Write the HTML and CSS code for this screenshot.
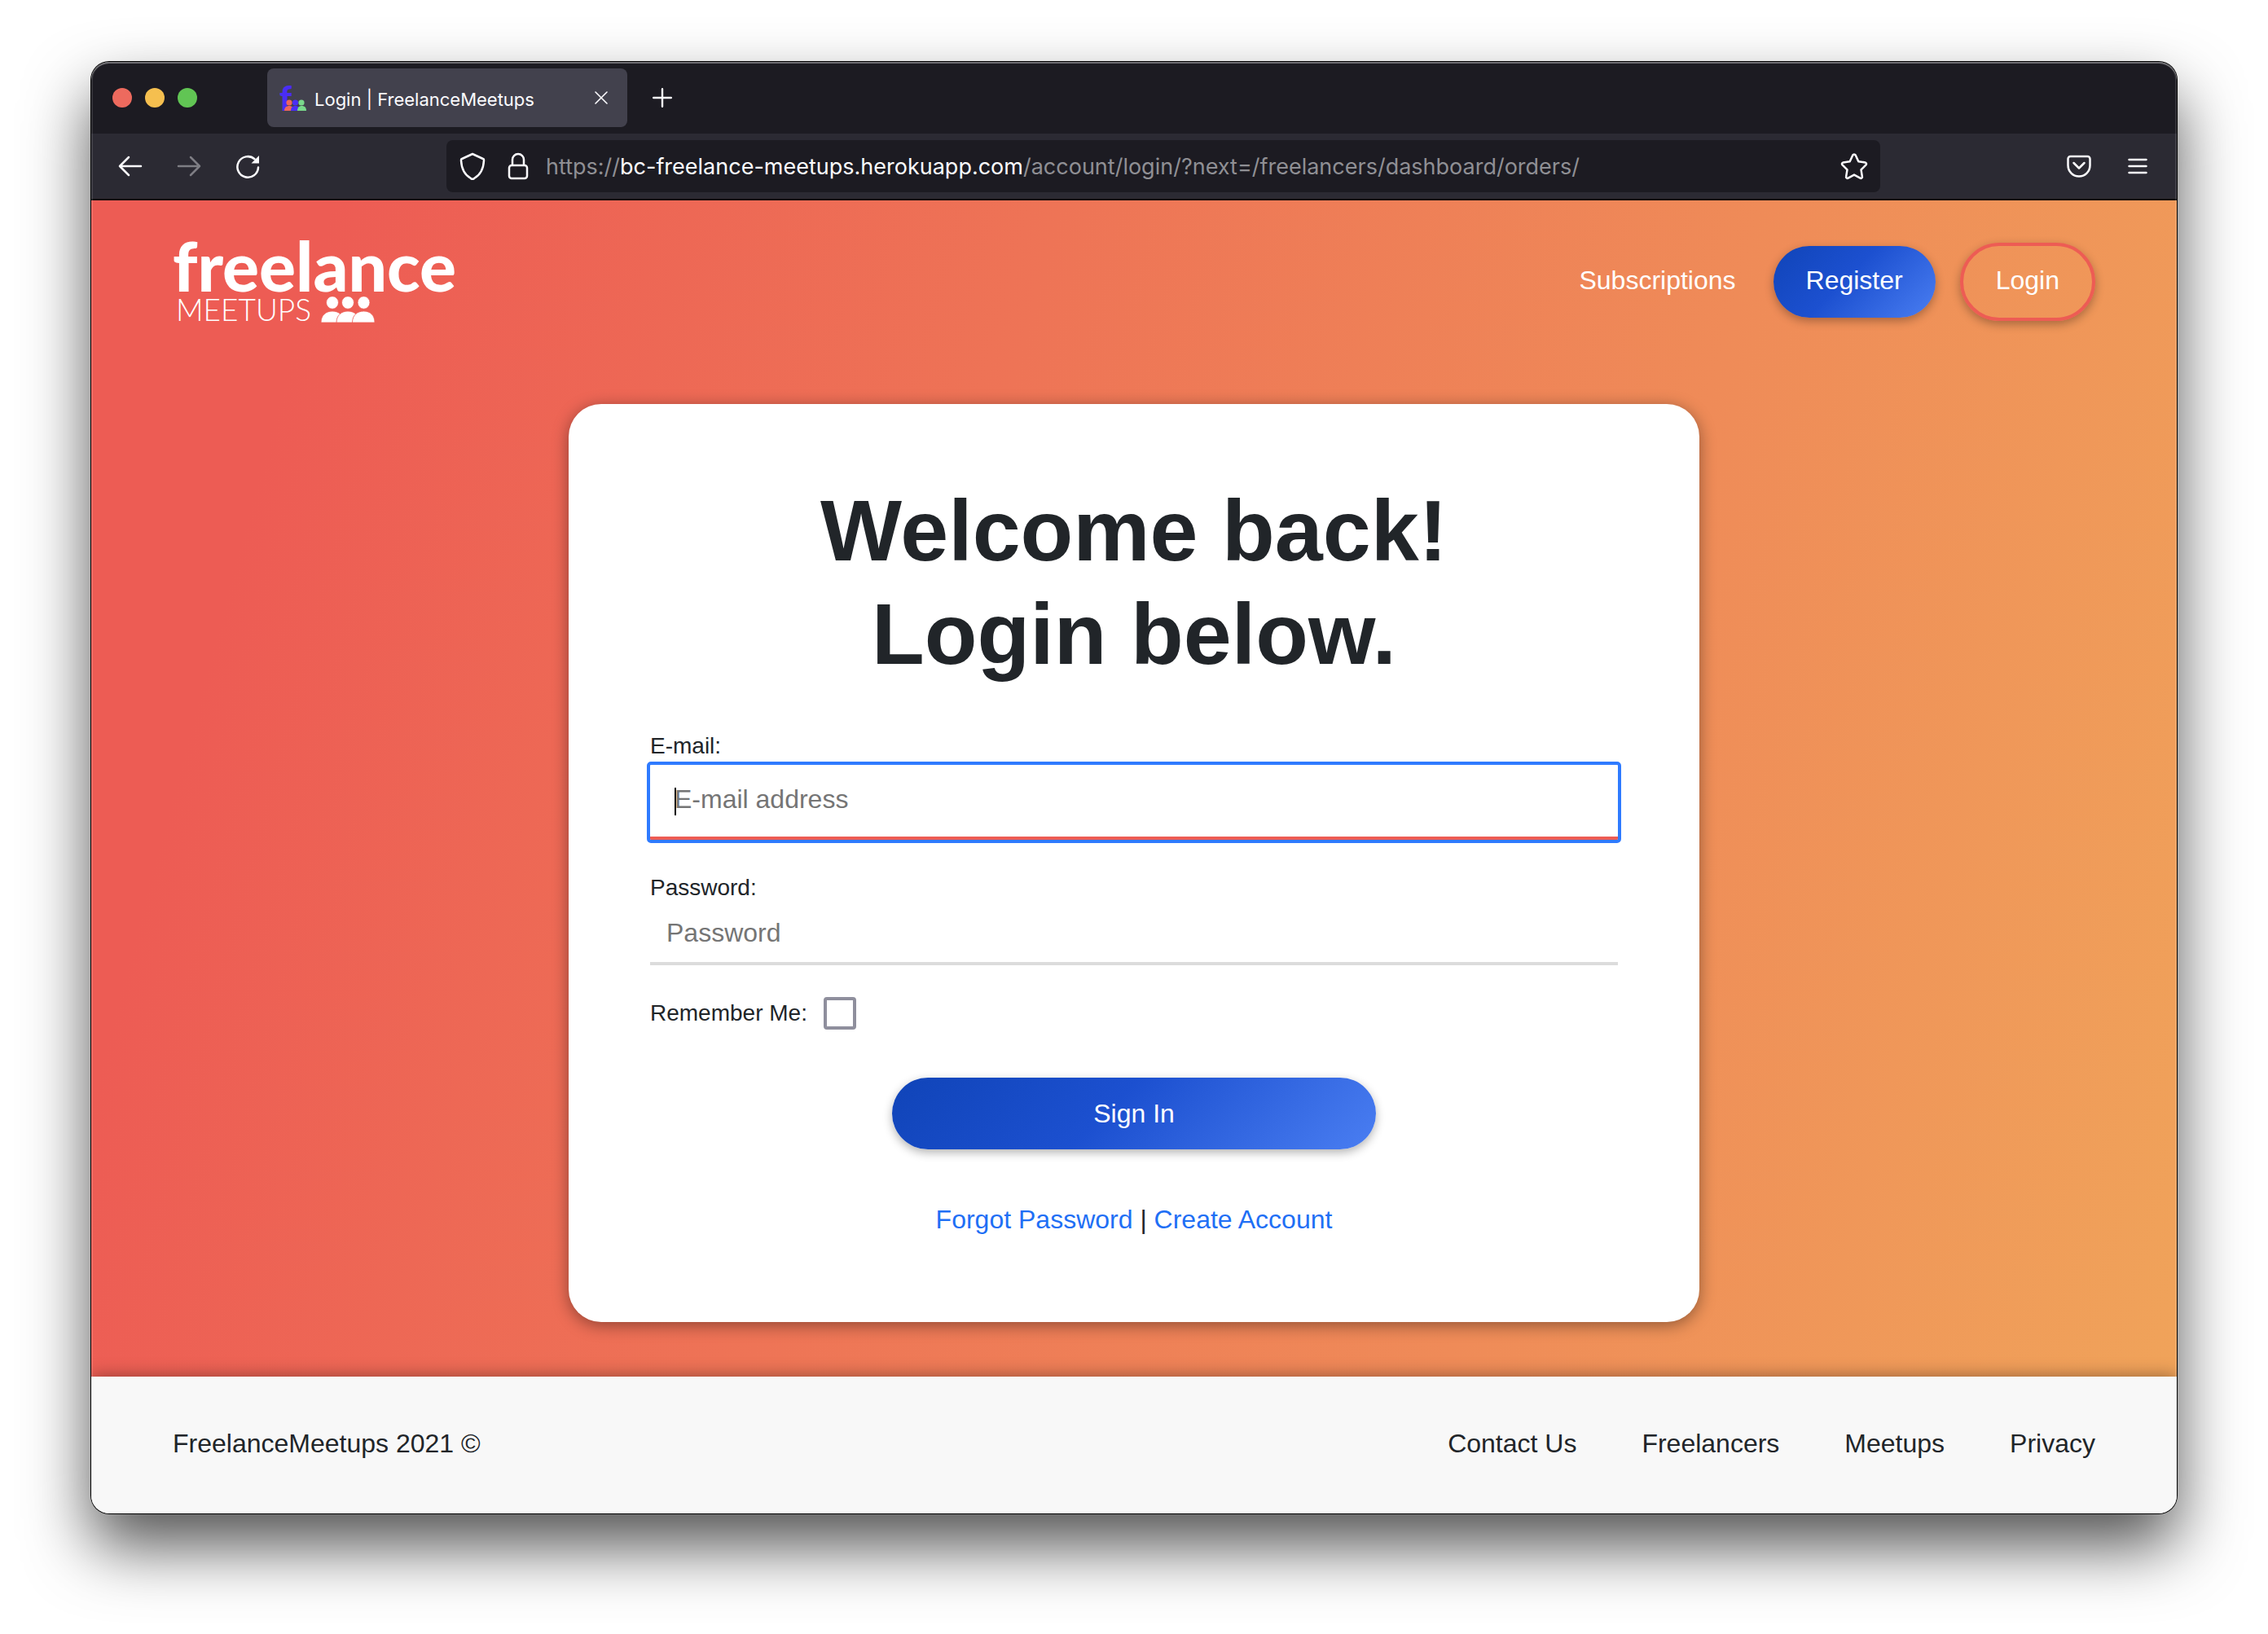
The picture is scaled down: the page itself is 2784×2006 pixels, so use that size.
FILE: index.html
```html
<!DOCTYPE html>
<html lang="en">
<head>
<meta charset="utf-8">
<title>Login | FreelanceMeetups</title>
<link rel="stylesheet" href="styles.css">
</head>
<body>
<div class="window">
  <div class="tabstrip">
    <div class="lights">
      <span class="light light-close"></span>
      <span class="light light-min"></span>
      <span class="light light-max"></span>
    </div>
    <div class="tab">
      <svg class="favicon" viewBox="0 0 32 32" aria-hidden="true">
        <text class="favicon-letter" x="-1" y="32">f</text>
        <g fill="#ee655c"><circle cx="11" cy="22" r="3.6"/><path d="M5 32c0-4 2.500-6 6-6s6 2 6 6z"/></g>
        <g fill="#4a2df5"><circle cx="18.500" cy="22" r="3.600"/><path d="M13 32c0-4 2-6 5.500-6s5.500 2 5.500 6z"/></g>
        <g fill="#79d98b"><circle cx="26" cy="22" r="3.600"/><path d="M21 32c0-4 2-6 5.500-6s5.500 2 5.500 6z"/></g>
      </svg>
      <span class="tab-title">Login | FreelanceMeetups</span>
      <button class="icon-button" type="button" aria-label="Close tab">
        <svg width="16" height="16" viewBox="0 0 16 16" fill="none" stroke="#fbfbfe" stroke-width="1.600" stroke-linecap="round"><path d="M1 1l14 14M15 1L1 15"/></svg>
      </button>
    </div>
    <button class="icon-button" type="button" aria-label="New tab">
      <svg width="24" height="24" viewBox="0 0 24 24" fill="none" stroke="#fbfbfe" stroke-width="2.400" stroke-linecap="round"><path d="M12 1.200v21.600M1.200 12h21.600"/></svg>
    </button>
  </div>

  <div class="toolbar">
    <div class="history">
      <button class="icon-button" type="button" aria-label="Back">
        <svg width="32" height="32" viewBox="0 0 32 32" fill="none" stroke="#fbfbfe" stroke-width="2.500" stroke-linecap="round" stroke-linejoin="round"><path d="M29 16H3M14 5L3 16l11 11"/></svg>
      </button>
      <button class="icon-button is-dim" type="button" aria-label="Forward">
        <svg width="32" height="32" viewBox="0 0 32 32" fill="none" stroke="#fbfbfe" stroke-width="2.500" stroke-linecap="round" stroke-linejoin="round"><path d="M3 16h26M18 5l11 11-11 11"/></svg>
      </button>
      <button class="icon-button" type="button" aria-label="Reload">
        <svg width="32" height="32" viewBox="0 0 32 32" fill="none" stroke="#fbfbfe" stroke-width="2.500" stroke-linecap="round"><path d="M29 17.500A12.800 12.800 0 1 1 24.500 7.200"/><path d="M30 3v9.500h-9.500z" fill="#fbfbfe" stroke="none"/></svg>
      </button>
    </div>
    <div class="urlbar">
      <svg width="44" height="34" viewBox="-6 0 44 34" fill="none" stroke="#fbfbfe" stroke-width="2.500" stroke-linejoin="round"><path d="M16 2L29 8c1 0 1 1 1 2-.5 10-4 17.500-12 22a3 3 0 0 1-4 0C6 27.500 2.500 20 2 10c0-1 0-2 1-2z"/></svg>
      <svg width="28" height="34" viewBox="0 0 28 34" fill="none" stroke="#fbfbfe" stroke-width="2.500"><path d="M7 16V9a7 7 0 0 1 14 0v7"/><rect x="3" y="16" width="22" height="16" rx="3"/></svg>
      <span class="url">https://<span class="url-host">bc-freelance-meetups.herokuapp.com</span>/account/login/?next=/freelancers/dashboard/orders/</span>
      <button class="icon-button" type="button" aria-label="Bookmark this page">
        <svg width="34" height="34" viewBox="0 0 34 34" fill="none" stroke="#fbfbfe" stroke-width="2.500" stroke-linejoin="round"><path d="M15.300 3.500a2 2 0 0 1 3.400 0l3.600 7.700 8.200 1.200a1.800 1.800 0 0 1 1 3l-6 6 1.400 8.500a1.700 1.700 0 0 1-2.500 1.800L17 27.600l-7.400 4.100a1.700 1.700 0 0 1-2.500-1.800l1.400-8.500-6-6a1.800 1.800 0 0 1 1-3l8.200-1.200z"/></svg>
      </button>
    </div>
    <div class="tools">
      <button class="icon-button" type="button" aria-label="Save to Pocket">
        <svg width="30" height="28" viewBox="0 0 30 28" fill="none" stroke="#fbfbfe" stroke-width="2.500" stroke-linecap="round" stroke-linejoin="round"><path d="M4.500 2h21a3 3 0 0 1 3 3v8a13.500 13.500 0 0 1-27 0V5a3 3 0 0 1 3-3z"/><path d="M8.500 10l6.500 6.500 6.500-6.500"/></svg>
      </button>
      <button class="icon-button" type="button" aria-label="Open application menu">
        <svg width="24" height="22" viewBox="0 0 24 22" stroke="#fbfbfe" stroke-width="2.500" stroke-linecap="round"><path d="M1.500 3h21M1.500 11h21M1.500 19h21"/></svg>
      </button>
    </div>
  </div>

  <main class="page">
    <header class="site-header">
      <a class="logo" href="#" aria-label="Freelance Meetups">
        <span class="logo-name">freelance</span>
        <span class="logo-sub">
          <span>MEETUPS</span>
          <svg width="66" height="32" viewBox="0 0 66 32" fill="#fff" stroke="#ed5c54" stroke-width="0.800" aria-hidden="true">
            <ellipse cx="14" cy="7.500" rx="7.500" ry="7.800"/><ellipse cx="33" cy="7.500" rx="7.500" ry="7.800"/><ellipse cx="52.500" cy="7.500" rx="7.500" ry="7.800"/>
            <path d="M0 32c0-9 6-14 14-14s14 5 14 14z"/><path d="M19 32c0-9 6-14 14-14s14 5 14 14z"/><path d="M38.500 32c0-9 6-14 14-14s13.500 5 13.500 14z"/>
          </svg>
        </span>
      </a>
      <nav class="site-nav">
        <a class="nav-link" href="#">Subscriptions</a>
        <a class="btn btn-primary" href="#">Register</a>
        <a class="btn btn-outline" href="#">Login</a>
      </nav>
    </header>

    <section class="card">
      <h1 class="card-title">Welcome back!<br>Login below.</h1>
      <form class="login-form">
        <div class="field">
          <label for="email">E-mail:</label>
          <div class="control is-focused">
            <input class="input" id="email" type="email" placeholder="E-mail address">
          </div>
        </div>
        <div class="field">
          <label for="password">Password:</label>
          <div class="control">
            <input class="input" id="password" type="password" placeholder="Password">
          </div>
        </div>
        <div class="remember">
          <label for="remember">Remember Me:</label>
          <input class="checkbox" id="remember" type="checkbox">
        </div>
        <button class="btn btn-primary btn-submit" type="submit">Sign In</button>
      </form>
      <p class="card-links"><a href="#">Forgot Password</a> | <a href="#">Create Account</a></p>
    </section>
  </main>

  <footer class="site-footer">
    <span>FreelanceMeetups 2021 ©</span>
    <nav class="footer-nav">
      <a href="#">Contact Us</a>
      <a href="#">Freelancers</a>
      <a href="#">Meetups</a>
      <a href="#">Privacy</a>
    </nav>
  </footer>
</div>
</body>
</html>
```
FILE: styles.css
```css
*,
*::before,
*::after {
  box-sizing: border-box;
}

body {
  margin: 0;
  padding: 76px 112px 148px;
  background: #fff;
  color: #212529;
  font-family: "Liberation Sans", Arial, sans-serif;
  font-size: 32px;
  line-height: 48px;
}

a {
  color: inherit;
  text-decoration: none;
}

svg {
  display: block;
  flex: none;
}

/* Browser window */
.window {
  position: relative;
  display: flex;
  flex-direction: column;
  min-height: calc(100vh - 224px);
  border-radius: 22px;
  overflow: hidden;
  box-shadow: 0 0 0 1px #000, 0 40px 80px rgba(0, 0, 0, 0.68);
}

.window::after {
  content: "";
  position: absolute;
  inset: 0;
  border-radius: inherit;
  box-shadow: inset 0 2px 0 rgba(255, 255, 255, 0.3), inset 0 0 0 2px rgba(255, 255, 255, 0.1);
  pointer-events: none;
}

.icon-button {
  display: flex;
  padding: 0;
  border: 0;
  background: none;
}

.is-dim {
  opacity: 0.4;
}

.tabstrip {
  display: flex;
  align-items: center;
  height: 88px;
  padding: 0 26px;
  background: #1c1b22;
  font-family: Inter, sans-serif;
}

.lights {
  display: flex;
  gap: 16px;
  margin-right: 86px;
}

.light {
  width: 24px;
  height: 24px;
  border-radius: 50%;
}

.light-close { background: #ed6a5e; }
.light-min { background: #f5bf4f; }
.light-max { background: #61c554; }

.tab {
  display: flex;
  align-items: center;
  width: 442px;
  height: 72px;
  margin-right: 31px;
  padding: 0 24px 0 16px;
  border-radius: 8px;
  background: #42414d;
  color: #fbfbfe;
  font-size: 22px;
}

.favicon {
  width: 32px;
  height: 32px;
  margin-right: 10px;
  overflow: visible;
}

.favicon-letter {
  fill: #4a2df5;
  font: 900 42px Lato, sans-serif;
}

.tab-title {
  flex: 1;
  padding-top: 4px;
  white-space: nowrap;
}

.toolbar {
  display: flex;
  align-items: center;
  height: 82px;
  padding: 0 36px 0 32px;
  border-bottom: 2px solid #0c0c0d;
  background: #2b2a33;
}

.history {
  display: flex;
  gap: 40px;
  margin-right: 228px;
}

.urlbar {
  display: flex;
  flex: 1;
  align-items: center;
  gap: 20px;
  height: 64px;
  padding: 0 15px 0 10px;
  border-radius: 8px;
  background: #1c1b22;
}

.url {
  flex: 1;
  padding-top: 2px;
  color: #8f8f94;
  font-family: Inter, sans-serif;
  font-size: 27px;
  white-space: nowrap;
}

.url-host {
  color: #fbfbfe;
}

.tools {
  display: flex;
  align-items: center;
  gap: 45px;
  margin-left: 229px;
}

/* Page */
.page {
  flex: 1;
  padding: 52px 100px 67px;
  background: linear-gradient(105deg, #ed5c54 10%, #f0a35a);
}

.site-header {
  display: flex;
  align-items: center;
  justify-content: space-between;
  height: 96px;
  color: #fff;
}

.logo {
  display: flex;
  flex-direction: column;
  gap: 4px;
  font-family: Lato, sans-serif;
}

.logo-name {
  font-size: 84px;
  font-weight: 900;
  line-height: 64px;
}

.logo-sub {
  display: flex;
  align-items: center;
  gap: 12px;
  padding-left: 4px;
  font-size: 37px;
  font-weight: 300;
  line-height: 36px;
}

.site-nav {
  display: flex;
  align-items: center;
  gap: 30px;
}

.nav-link {
  padding: 0 16px 4px 0;
}

.btn {
  padding: 18px 40px 22px;
  border: 0;
  border-radius: 48px;
  color: #fff;
  font: inherit;
  text-align: center;
  box-shadow: 0 4px 12px rgba(0, 0, 0, 0.3);
}

.btn-primary {
  background: linear-gradient(135deg, #1044b8, #1c50d0 45%, #4a7ef2);
}

.btn-outline {
  border: 4px solid #ed5c54;
}

.card {
  max-width: 1388px;
  margin: 102px auto 0;
  padding: 92px 100px 102px;
  border-radius: 40px;
  background: #fff;
  box-shadow: 0 4px 20px rgba(0, 0, 0, 0.4);
}

.card-title {
  margin: 0 0 53px;
  font-size: 106px;
  line-height: 127px;
  text-align: center;
}

.login-form {
  display: flex;
  flex-direction: column;
  gap: 38px;
  font-size: 28px;
  line-height: 42px;
}

.field {
  display: flex;
  flex-direction: column;
  gap: 2px;
}

.control {
  position: relative;
}

.input {
  display: block;
  width: 100%;
  height: 72px;
  padding: 0 20px 4px;
  border: 0;
  border-bottom: 4px solid #dcdcdc;
  background: #fff;
  color: #212529;
  font: inherit;
  font-size: 32px;
}

.input::placeholder {
  color: #757575;
  opacity: 1;
}

.is-focused .input {
  height: 92px;
  padding: 0 30px 4px;
  border-bottom-color: #ed5c54;
  outline: 4px solid #2f7bff;
  border-radius: 1px;
}

.is-focused::after {
  content: "";
  position: absolute;
  top: 28px;
  left: 30px;
  width: 2px;
  height: 34px;
  background: #000;
}

.remember {
  display: flex;
  align-items: center;
  gap: 20px;
}

.checkbox {
  width: 40px;
  height: 40px;
  margin: 0;
  border: 4px solid #8f8f9d;
  border-radius: 4px;
  background: #fff;
  appearance: none;
}

.btn-submit {
  width: 50%;
  margin: 20px auto 0;
  padding: 20px 40px;
  font-size: 32px;
  line-height: 48px;
}

.card-links {
  margin: 62px 0 0;
  text-align: center;
}

.card-links a {
  color: #1f6ff5;
}

.site-footer {
  display: flex;
  justify-content: space-between;
  padding: 58px 100px 62px;
  background: #f8f8f8;
  box-shadow: 0 0 20px rgba(0, 0, 0, 0.4);
}

.footer-nav {
  display: flex;
  gap: 80px;
}
```
